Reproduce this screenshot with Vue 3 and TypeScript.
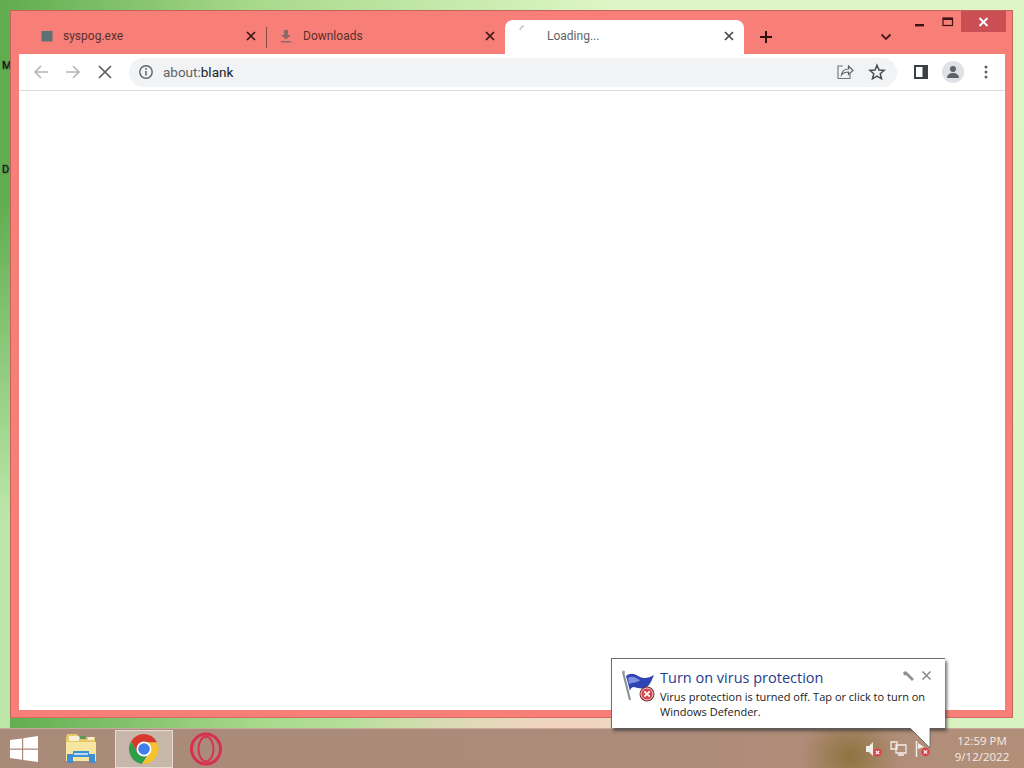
<script setup lang="ts">
const tabs = [
  { title: 'syspog.exe', kind: 'square', active: false },
  { title: 'Downloads', kind: 'download', active: false },
  { title: 'Loading...', kind: 'spinner', active: true },
];
</script>

<template>
  <div class="page">
    <div class="desktop">
      <span class="desk-label label-m">M</span>
      <span class="desk-label label-d">D</span>

      <div class="window">
        <div class="caption">
          <svg class="cap-min" width="12" height="4" viewBox="0 0 12 4"><rect x="1" y="1" width="9" height="2.4" fill="#3a1512" /></svg>
          <svg class="cap-max" width="12" height="10" viewBox="0 0 12 10"><rect x="1" y="1" width="9.5" height="7.5" fill="none" stroke="#3a1512" stroke-width="1.2" /><rect x="1" y="1" width="9.5" height="2" fill="#3a1512" /></svg>
          <div class="cap-close">
            <svg width="11" height="10" viewBox="0 0 11 10"><path d="M1.5 1 9.5 9M9.5 1 1.5 9" stroke="#fff" stroke-width="1.8" fill="none" /></svg>
          </div>
        </div>

        <div class="tabstrip">
          <div v-for="tab in tabs" :key="tab.title" class="tab" :class="{ active: tab.active }">
            <svg v-if="tab.kind === 'square'" class="fav" width="14" height="14" viewBox="0 0 14 14"><rect x="1.5" y="2" width="11" height="10.5" fill="#5d7073" /></svg>
            <svg v-else-if="tab.kind === 'download'" class="fav" width="14" height="14" viewBox="0 0 14 14"><path d="M5 1h4v5h3L7 10.5 2 6h3zM2 12h10v1.5H2z" fill="#8b6a66" /></svg>
            <svg v-else class="fav" width="14" height="14" viewBox="0 0 14 14"><path d="M2 7C2.5 5 4 3.4 6 3" stroke="#c4c8cc" stroke-width="1.6" fill="none" /></svg>
            <span class="tab-title">{{ tab.title }}</span>
            <svg class="tab-close" width="12" height="12" viewBox="0 0 12 12"><path d="M2 2 10 10M10 2 2 10" :stroke="tab.active ? '#45494c' : '#3a1512'" stroke-width="1.7" fill="none" /></svg>
          </div>
          <svg class="new-tab" width="14" height="14" viewBox="0 0 14 14"><path d="M7 1v12M1 7h12" stroke="#2e0f0c" stroke-width="2" fill="none" /></svg>
          <svg class="tab-menu" width="12" height="8" viewBox="0 0 12 8"><path d="M1.5 1.5 6 6l4.5-4.5" stroke="#4a1c18" stroke-width="1.8" fill="none" /></svg>
        </div>

        <div class="toolbar">
          <svg class="nav" width="18" height="18" viewBox="0 0 18 18"><path d="M16 9H3M9 3 3 9l6 6" stroke="#b3b6b9" stroke-width="1.6" fill="none" /></svg>
          <svg class="nav" width="18" height="18" viewBox="0 0 18 18"><path d="M2 9h13M9 3l6 6-6 6" stroke="#b3b6b9" stroke-width="1.6" fill="none" /></svg>
          <svg class="nav" width="18" height="18" viewBox="0 0 18 18"><path d="M3 3 15 15M15 3 3 15" stroke="#5b5e62" stroke-width="1.7" fill="none" /></svg>
          <div class="omnibox">
            <svg width="16" height="16" viewBox="0 0 16 16"><circle cx="8" cy="8" r="6.2" fill="none" stroke="#5f6368" stroke-width="1.4" /><path d="M8 7v4.4" stroke="#5f6368" stroke-width="1.5" /><circle cx="8" cy="4.9" r="0.95" fill="#5f6368" /></svg>
            <span class="url"><span class="url-dim">about:</span>blank</span>
            <svg class="share" width="18" height="18" viewBox="0 0 18 18"><path d="M7 3H2v12.500h12V11" stroke="#70757a" stroke-width="1.1" fill="none" /><path d="M5.500 12c.5-4 3.500-6 7-6V3L17 7.500 12.500 11.500V9C9.500 9 7 10 5.500 12z" stroke="#5f6368" stroke-width="1.200" fill="none" /></svg>
            <svg class="star" width="18" height="18" viewBox="0 0 18 18"><path d="M9 2.200 11 7l5.200.4-4 3.400 1.300 5L9 13.200l-4.500 2.600 1.300-5-4-3.400L7 7z" stroke="#4a4d51" stroke-width="1.500" fill="none" /></svg>
          </div>
          <svg class="panel" width="14" height="14" viewBox="0 0 14 14"><path d="M0 0h14v14H0zM2 2v10h6.500V2z" fill="#3c4043" fill-rule="evenodd" /></svg>
          <div class="avatar">
            <svg width="16" height="16" viewBox="0 0 16 16"><circle cx="8" cy="5" r="3" fill="#5f6368" /><path d="M2 14c0-3.500 3-5 6-5s6 1.500 6 5z" fill="#5f6368" /></svg>
          </div>
          <svg class="dots" width="4" height="14" viewBox="0 0 4 14"><circle cx="2" cy="2" r="1.500" fill="#5f6368" /><circle cx="2" cy="7" r="1.500" fill="#5f6368" /><circle cx="2" cy="12" r="1.500" fill="#5f6368" /></svg>
        </div>
        <div class="content"></div>
      </div>

      <div class="balloon">
        <svg class="flag" width="36" height="34" viewBox="0 0 36 34">
          <path d="M1 3 8 31" stroke="#8b9097" stroke-width="2" fill="none" />
          <circle cx="1.500" cy="3" r="1.500" fill="#9aa0a8" />
          <path d="M4 7C9 3 13 5 18 8 22 10 27 9 32 6 30 11 28 15 26 17 22 21 16 19 12 18 10 18 8 20 8 22z" fill="#2f45b5" />
          <path d="M6 9C10 6 14 9 18 11 16 14 11 13 7 15z" fill="#7f92e0" />
          <circle cx="25" cy="25" r="7.500" fill="#7b2a30" />
          <circle cx="25" cy="25" r="6" fill="#d9434d" stroke="#f4d6d6" stroke-width="1" />
          <path d="M22.300 22.300 27.700 27.700M27.700 22.300 22.300 27.700" stroke="#fff" stroke-width="1.700" />
        </svg>
        <div class="balloon-text">
          <div class="balloon-title">Turn on virus protection</div>
          <div class="balloon-body">Virus protection is turned off. Tap or click to turn on Windows Defender.</div>
        </div>
        <svg class="wrench" width="13" height="12" viewBox="0 0 13 12"><path d="M1 2.500 3.500 1 6 3l6 6-2 2-6-6-2 .5z" fill="#8f9296" /></svg>
        <svg class="balloon-x" width="11" height="11" viewBox="0 0 11 11"><path d="M1.500 1.500 9.500 9.500M9.500 1.500 1.500 9.500" stroke="#8a8d91" stroke-width="1.700" /></svg>
        <svg class="tail" width="21" height="21" viewBox="0 0 21 21"><path d="M0 0 20 20V0z" fill="#fff" /><path d="M0 0 20 20V0" fill="none" stroke="#555" stroke-width="0.800" /></svg>
      </div>
    </div>

    <div class="taskbar">
      <svg class="start" width="28" height="26" viewBox="0 0 28 26"><path d="M0 4 12 2.400V12.500H0zM13.200 2.200 28 0V12.500H13.200zM0 13.700H12V23.800L0 22zM13.200 13.700H28V26L13.200 24z" fill="#fff" /></svg>
      <svg class="explorer" width="32" height="31" viewBox="0 0 32 31">
        <path d="M1 5 2 1h10l2 3h16v22H1z" fill="#e8c868" />
        <path d="M4 3h10v5H4z" fill="#f6f0d8" />
        <path d="M15 3h6v3h-6z" fill="#5a9a58" />
        <path d="M23 4h6v3h-6z" fill="#f4eed2" />
        <path d="M1 9h30v19H1z" fill="#f7e6a0" />
        <path d="M2 30V21h6v-3h16v3h6v9h-6v-6H8v6z" fill="#3f8fd2" />
        <path d="M9 20h14v2H9z" fill="#b9dcf4" />
      </svg>
      <div class="task-btn">
        <svg width="32" height="32" viewBox="0 0 32 32">
          <path d="M16 1A15 15 0 0 0 3 8.500L9.500 20 16 9.500H29A15 15 0 0 0 16 1z" fill="#d8392f" />
          <path d="M3 8.500A15 15 0 0 0 14 30.900L20.500 20 9.500 20z" fill="#2f9e4a" />
          <path d="M29 9.500H16L22.500 19 14 30.900A15 15 0 0 0 29 9.500z" fill="#f3c22c" />
          <circle cx="16" cy="16" r="7.500" fill="#fff" />
          <circle cx="16" cy="16" r="5.800" fill="#3f7fe8" />
        </svg>
      </div>
      <svg class="opera" width="34" height="34" viewBox="0 0 34 34"><ellipse cx="17" cy="17" rx="14.500" ry="15" fill="none" stroke="#d83150" stroke-width="3" /><ellipse cx="17" cy="17" rx="7.500" ry="12.500" fill="none" stroke="#d83150" stroke-width="2" /></svg>

      <div class="tray">
        <svg width="16" height="16" viewBox="0 0 16 16"><path d="M0 5h3l4-4v14l-4-4H0z" fill="#f2ece6" /><circle cx="11.500" cy="11.500" r="4" fill="#d9434d" /><path d="M9.800 9.800l3.400 3.400M13.200 9.800l-3.400 3.400" stroke="#fff" stroke-width="1.200" /></svg>
        <svg width="17" height="16" viewBox="0 0 17 16"><path d="M1 1h6v7H1zM6 4h10v8H6zM8 14h6M11 12v2" fill="none" stroke="#f2ece6" stroke-width="1.300" /></svg>
        <svg width="16" height="16" viewBox="0 0 16 16"><path d="M1.500 0v16" stroke="#f2ece6" stroke-width="1.500" /><path d="M3 2 9 6 3 8z" fill="#f2ece6" /><circle cx="10.500" cy="11" r="4.200" fill="#d9434d" /><path d="M8.800 9.300l3.400 3.400M12.200 9.300l-3.400 3.400" stroke="#fff" stroke-width="1.200" /></svg>
      </div>
      <div class="clock">
        <div>12:59 PM</div>
        <div>9/12/2022</div>
      </div>
    </div>
  </div>
</template>

<style>
html,
body {
  margin: 0;
  overflow: hidden;
}
</style>

<style scoped>
.page {
  width: 1024px;
  height: 768px;
  display: flex;
  flex-direction: column;
  overflow: hidden;
  font-family: Roboto, "Liberation Sans", sans-serif;
}

.desktop {
  position: relative;
  flex: 1;
  background:
    radial-gradient(ellipse 220px 40px at 560px 100%, #f5cfc0 0%, rgba(245, 207, 192, 0) 100%),
    linear-gradient(90deg, rgba(96, 172, 78, 1) 0%, rgba(150, 208, 120, 0.75) 25%, rgba(220, 246, 198, 0) 60%),
    linear-gradient(180deg, #def6c6 0%, #d8f2c2 100%);
}

.desktop::after {
  content: "";
  position: absolute;
  left: 0;
  top: 200px;
  width: 10px;
  height: 528px;
  background: linear-gradient(180deg, rgba(190, 230, 170, 0) 0%, #bce6a8 60%);
}

.desk-label {
  position: absolute;
  left: 2px;
  font-size: 11px;
  color: #111;
  width: 8px;
  overflow: hidden;
  text-shadow: 0 0 2px #333;
}

.label-m {
  top: 59px;
}

.label-d {
  top: 163px;
}

.window {
  position: absolute;
  left: 10px;
  top: 10px;
  width: 1003px;
  height: 708px;
  box-sizing: border-box;
  display: flex;
  flex-direction: column;
  padding: 9px 7px 7px 8px;
  background: #f77f78;
  border: 1px solid #c0645c;
  border-bottom-color: #d96a62;
  z-index: 1;
}

.caption {
  position: absolute;
  top: 0;
  right: 6px;
  display: flex;
  align-items: flex-start;
}

.cap-min {
  margin: 12px 16px 0 0;
}

.cap-max {
  margin: 6px 7px 0 0;
}

.cap-close {
  width: 45px;
  height: 21px;
  display: flex;
  align-items: center;
  justify-content: center;
  background: #c94f55;
}

.tabstrip {
  height: 34px;
  display: flex;
  align-items: center;
  padding-left: 8px;
  flex: none;
}

.tab {
  position: relative;
  width: 239px;
  height: 34px;
  box-sizing: border-box;
  display: flex;
  align-items: center;
  padding: 0 9px 2px 13px;
  font-size: 12px;
  color: #5a2f2b;
}

.tab + .tab::before {
  content: "";
  position: absolute;
  left: 0;
  top: 7px;
  height: 21px;
  width: 1px;
  background: #8e4a44;
}

.tab.active {
  background: #fff;
  border-radius: 8px 8px 0 0;
  color: #5f6368;
}

.tab.active::before {
  display: none;
}

.fav {
  flex: none;
  margin-right: 9px;
}

.tab.active .fav {
  margin-top: -12px;
}

.tab:nth-child(2) .fav {
  margin-right: 10px;
}

.tab:nth-child(3) .fav {
  margin-right: 15px;
}

.tab-title {
  flex: 1;
}

.new-tab {
  margin-left: 15px;
}

.tab-menu {
  margin-left: 107px;
}

.toolbar {
  height: 36px;
  display: flex;
  align-items: center;
  background: #fff;
  border-bottom: 1px solid #dadce0;
  flex: none;
  padding: 0 13px;
  box-sizing: content-box;
}

.nav {
  flex: none;
  margin-right: 14px;
}

.nav:nth-child(3) {
  margin-right: 15px;
}

.omnibox {
  flex: none;
  width: 768px;
  height: 29px;
  box-sizing: border-box;
  display: flex;
  align-items: center;
  padding: 0 5px 0 9px;
  border-radius: 15px;
  background: #f1f3f4;
}

.url {
  flex: 1;
  margin-left: 9px;
  font-size: 13.5px;
  color: #202124;
}

.url-dim {
  color: #5f6368;
}

.share {
  margin-right: 14px;
}

.star {
  margin-right: 6px;
}

.panel {
  flex: none;
  margin-left: 17px;
}

.avatar {
  flex: none;
  width: 22px;
  height: 22px;
  margin-left: 14px;
  border-radius: 50%;
  background: #dee1e6;
  display: flex;
  align-items: center;
  justify-content: center;
}

.dots {
  flex: none;
  margin-left: 20px;
}

.content {
  flex: 1;
  background: #fff;
}

.balloon {
  position: absolute;
  left: 611px;
  top: 658px;
  width: 334px;
  height: 70px;
  box-sizing: border-box;
  display: flex;
  padding: 9px 0 0 10px;
  background: #fff;
  border: 1px solid #6e6e6e;
  border-width: 1px 0 0 1px;
  box-shadow: 2px 3px 3px rgba(60, 60, 60, 0.75);
  font-family: "Open Sans", "Noto Sans", sans-serif;
  z-index: 2;
}

.flag {
  flex: none;
  margin-top: 1px;
}

.balloon-text {
  margin-left: 2px;
  width: 282px;
}

.balloon-title {
  font-size: 14.500px;
  line-height: 20px;
  color: #1f3b8f;
}

.balloon-body {
  font-size: 11px;
  line-height: 15px;
  margin-top: 1px;
  color: #1a1a1a;
}

.wrench {
  position: absolute;
  left: 290px;
  top: 11px;
}

.balloon-x {
  position: absolute;
  left: 309px;
  top: 11px;
}

.tail {
  position: absolute;
  left: 298px;
  top: 69px;
}

.taskbar {
  position: relative;
  height: 40px;
  flex: none;
  display: flex;
  align-items: center;
  padding-left: 10px;
  background:
    radial-gradient(ellipse 50px 44px at 850px 70%, #8f7340 0%, rgba(143, 115, 64, 0) 100%),
    linear-gradient(90deg, #a98a78 0%, #ad8b7a 60%, #b28f78 100%);
  border-top: 1px solid #c5ab9d;
  box-sizing: border-box;
}

.start {
  flex: none;
}

.explorer {
  flex: none;
  margin-left: 27px;
}

.task-btn {
  flex: none;
  width: 58px;
  height: 38px;
  box-sizing: border-box;
  margin-left: 18px;
  display: flex;
  align-items: center;
  justify-content: center;
  background: #c7b6aa;
  border: 1px solid #e6dcd4;
}

.opera {
  flex: none;
  margin-left: 16px;
}

.tray {
  margin-left: auto;
  display: flex;
  align-items: center;
  gap: 8px;
}

.clock {
  width: 74px;
  margin: 0 5px 0 14px;
  text-align: center;
  font-family: "Open Sans", "Noto Sans", sans-serif;
  font-size: 11.500px;
  line-height: 16px;
  color: #f3ece6;
}
</style>
